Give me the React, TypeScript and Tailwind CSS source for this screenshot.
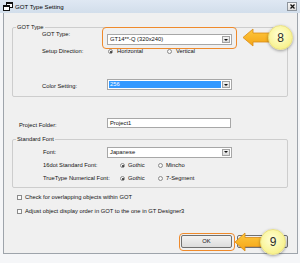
import type { ReactNode } from 'react';

const Radio = ({ checked }: { checked?: boolean }) => (
  <span className="flex h-[5px] w-[5px] shrink-0 items-center justify-center rounded-full border border-[#8a8a8a] bg-[#f6f6f6]">
    {checked && <span className="h-[2px] w-[2px] rounded-full bg-[#1c1c1c]" />}
  </span>
);

const Check = () => (
  <span className="h-[5px] w-[5px] shrink-0 border border-[#8a8a8a] bg-[#fbfbfb]" />
);

const Caret = () => (
  <svg width="4" height="2" viewBox="0 0 4 2">
    <path d="M0 0h4L2 2z" fill="#111" />
  </svg>
);

const Select = ({ value, selected }: { value: string; selected?: boolean }) => (
  <div className="flex h-[11px] w-[125px] items-center border border-[#a7a7a7] bg-white">
    <div
      className={
        selected
          ? 'm-[1px] flex h-[7px] flex-1 items-center bg-[#3399ff] pl-[1px] text-white'
          : 'flex h-full flex-1 items-center pl-[2px]'
      }
    >
      {value}
    </div>
    <div className="mr-[1px] flex h-[7px] w-[8px] items-center justify-center border border-[#a3a3a3] bg-[linear-gradient(#f2f2f2,#dcdcdc)]">
      <Caret />
    </div>
  </div>
);

const Group = ({ title, className, children }: { title: string; className: string; children: ReactNode }) => (
  <div className={`ml-[8px] flex w-[276px] flex-col rounded-[2px] border border-[#cdcdcd] ${className}`}>
    <span className="-mt-[4px] ml-[3px] w-fit bg-[#f0f0f0] px-[1px]">{title}</span>
    {children}
  </div>
);

const Arrow = ({ className, w, h }: { className: string; w: number; h: number }) => {
  const m = h / 2;
  return (
    <svg className={className} width={w} height={h} viewBox={`0 0 ${w} ${h}`}>
      <defs>
        <linearGradient id={`ag${w}`} x1="0" y1="0" x2="0" y2="1">
          <stop offset="0" stopColor="#fdc83e" />
          <stop offset="1" stopColor="#f4a416" />
        </linearGradient>
      </defs>
      <path
        d={`M1 ${m}L11 1V${m - 4.5}H${w - 1}V${m + 4.5}H11V${h - 1}Z`}
        fill={`url(#ag${w})`}
        stroke="#d98c16"
        strokeWidth="0.8"
        strokeLinejoin="round"
      />
    </svg>
  );
};

const Badge = ({ n, className }: { n: string; className: string }) => (
  <div
    className={`absolute flex items-center justify-center rounded-full border border-[#e9e084] bg-[radial-gradient(circle_at_45%_40%,#ffffd6,#f8f290_70%,#efe67a)] text-[12px] leading-none text-[#2b2b2b] shadow-[0_1px_3px_rgba(0,0,0,0.35)] ${className}`}
  >
    {n}
  </div>
);

export default function App() {
  return (
    <div className="relative h-[263px] w-[300px] overflow-hidden bg-[#f5f6f8] font-['Liberation_Sans',Arial,sans-serif] text-[5.8px] leading-[7px] text-[#111]">
      {/* title bar */}
      <div className="flex h-[13px] items-center bg-[linear-gradient(#dfe8f3,#d2deeb)] pl-[3px] pr-[3px]">
        <svg width="10" height="9" viewBox="0 0 10 9">
          <rect x="3.5" y="0.5" width="6" height="5" fill="#fff" stroke="#111" />
          <rect x="3.5" y="0.5" width="6" height="1.5" fill="#111" />
          <rect x="0.5" y="3.5" width="6" height="5" fill="#fff" stroke="#111" />
          <rect x="0.5" y="3.5" width="6" height="1.5" fill="#111" />
        </svg>
        <span className="ml-[2px] text-[6.1px] leading-[13px] text-black">GOT Type Setting</span>
        <div className="ml-auto flex h-[9px] w-[10px] items-center justify-center border border-[#8e959d] bg-[linear-gradient(#f7f7f7,#dedede)]">
          <svg width="5" height="5" viewBox="0 0 5 5">
            <path d="M0.5 0.5l4 4M4.5 0.5l-4 4" stroke="#111" strokeWidth="1.3" />
          </svg>
        </div>
      </div>

      {/* dialog body */}
      <div className="ml-[3px] flex h-[241px] w-[295px] flex-col border-x border-b border-[#9ea4ab] bg-[#f0f0f0]">
        <Group title="GOT Type" className="mt-[14px] pb-[6px]">
          <div className="flex h-[14px] items-start pl-[29px]">
            <span className="w-[65px]">GOT Type:</span>
            <div className="mt-[3px]">
              <Select value="GT14**-Q (320x240)" />
            </div>
          </div>
          <div className="mt-[3px] flex h-[7px] items-center pl-[29px]">
            <span className="w-[66px]">Setup Direction:</span>
            <div className="flex w-[59px] items-center gap-[4px]">
              <Radio checked />
              <span>Horizontal</span>
            </div>
            <div className="flex items-center gap-[4px]">
              <Radio />
              <span>Vertical</span>
            </div>
          </div>
          <div className="mt-[24px] flex h-[11px] items-center pl-[29px]">
            <span className="mt-[4px] w-[65px]">Color Setting:</span>
            <Select value="256" selected />
          </div>
        </Group>

        <div className="mt-[21px] flex h-[10px] items-center pl-[15px]">
          <span className="mt-[4px] w-[88px]">Project Folder:</span>
          <div className="flex h-full w-[124px] items-center border border-[#a7a7a7] bg-white pl-[2px]">Project1</div>
        </div>

        <Group title="Standard Font" className="mt-[11px] pb-[5px]">
          <div className="mt-[4px] flex h-[10px] items-center pl-[30px]">
            <span className="w-[64px]">Font:</span>
            <Select value="Japanese" />
          </div>
          <div className="mt-[5px] flex h-[7px] items-center pl-[30px]">
            <span className="w-[77px]">16dot Standard Font:</span>
            <div className="flex w-[38px] items-center gap-[3px]">
              <Radio checked />
              <span>Gothic</span>
            </div>
            <div className="flex items-center gap-[3px]">
              <Radio />
              <span>Mincho</span>
            </div>
          </div>
          <div className="mt-[6px] flex h-[7px] items-center pl-[30px]">
            <span className="w-[77px]">TrueType Numerical Font:</span>
            <div className="flex w-[38px] items-center gap-[3px]">
              <Radio checked />
              <span>Gothic</span>
            </div>
            <div className="flex items-center gap-[3px]">
              <Radio />
              <span>7-Segment</span>
            </div>
          </div>
        </Group>

        <div className="mt-[6px] flex h-[7px] items-center gap-[3px] pl-[13px]">
          <Check />
          <span>Check for overlapping objects within GOT</span>
        </div>
        <div className="mt-[7px] flex h-[7px] items-center gap-[3px] pl-[13px]">
          <Check />
          <span>Adjust object display order in GOT to the one in GT Designer3</span>
        </div>

        <div className="mt-[20px] flex justify-end gap-[5px] pr-[9px]">
          <button className="flex h-[13px] w-[51px] items-center justify-center rounded-[2px] border border-[#707070] bg-[linear-gradient(#f2f2f2,#dcdcdc)] text-[5.8px]">
            OK
          </button>
          <button className="flex h-[13px] w-[51px] items-center justify-center rounded-[2px] border border-[#707070] bg-[linear-gradient(#f2f2f2,#dcdcdc)] text-[5.8px]">
            Cancel
          </button>
        </div>
      </div>

      {/* annotations */}
      <div className="absolute left-[102px] top-[27px] h-[22px] w-[135px] rounded-[4px] border-[1.5px] border-[#ef8a2b]" />
      <div className="absolute left-[179px] top-[233px] h-[18px] w-[56px] rounded-[4px] border-[1.5px] border-[#ef8a2b]" />
      <Arrow className="absolute left-[242px] top-[28px]" w={32} h={19} />
      <Badge n="8" className="left-[268px] top-[25px] h-[25px] w-[25px]" />
      <Arrow className="absolute left-[234px] top-[232px]" w={34} h={20} />
      <Badge n="9" className="left-[260px] top-[229px] h-[26px] w-[26px]" />
    </div>
  );
}
